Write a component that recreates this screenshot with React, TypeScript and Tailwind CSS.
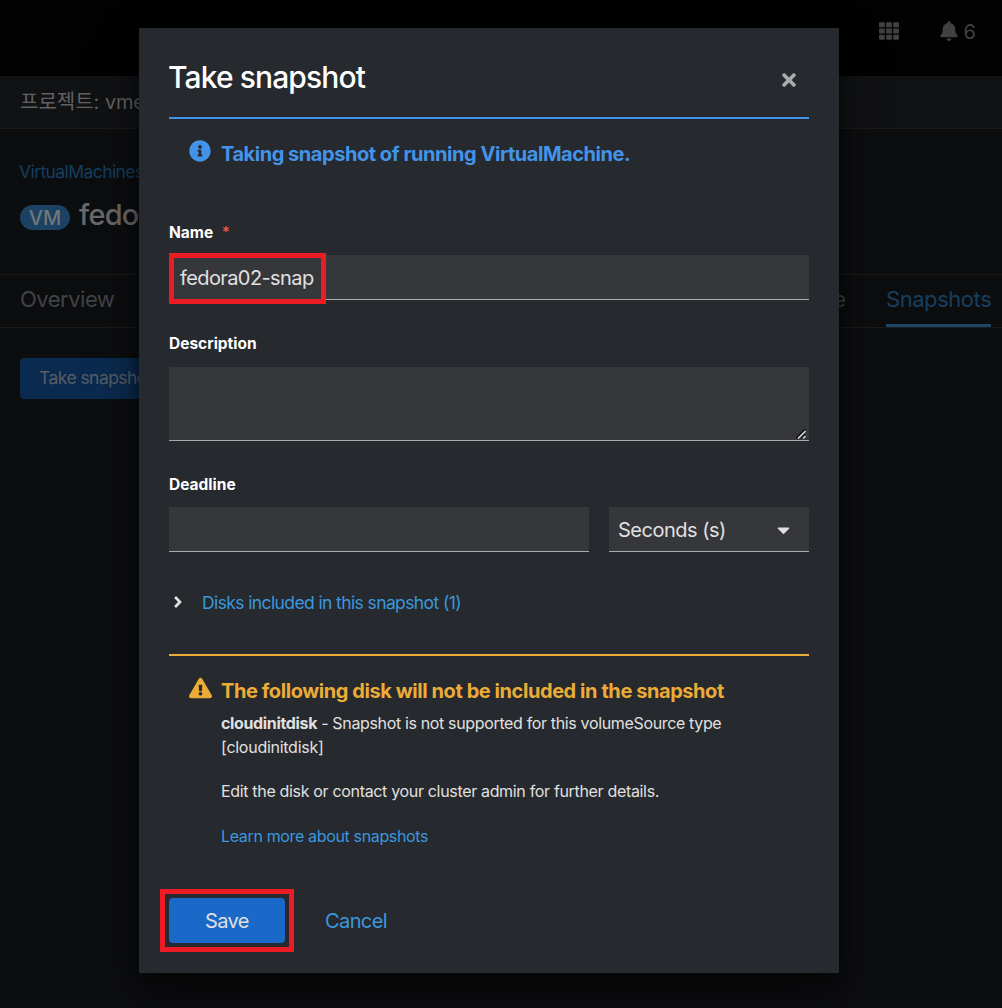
import React from "react";
import { FaBell, FaCaretDown, FaExclamationTriangle, FaInfoCircle, FaTh, FaTimes, FaAngleRight } from "react-icons/fa";

function ConsolePage() {
  return (
    <div className="h-full w-full bg-[#0c0d0f]">
      <header className="flex h-[76px] items-start justify-end bg-[#020202] pr-[26px] text-[#414141]">
        <FaTh className="mt-[21px] h-[20px] w-[20px]" />
        <FaBell className="mt-[21px] ml-[41px] h-[20px] w-[18px]" />
        <span className="mt-[17px] ml-[6px] text-[20px] leading-[30px]">6</span>
      </header>
      <div className="flex h-[53px] items-center border-b border-[#1b1b1c] bg-[#111214] pb-[3px] pl-[20px]">
        <span className="mt-[2px] text-[20px] leading-[30px] whitespace-nowrap text-[#616162]">프로젝트: <span className="tracking-[-0.2px]">vme</span></span>
      </div>
      <div className="h-[145px] px-[20px] pt-[31px]">
        <div className="-ml-[1px] text-[17.5px] leading-[24px] tracking-[-0.58px] text-[#163e60]">VirtualMachines</div>
        <div className="mt-[14px] flex items-center">
          <span className="mt-[4px] flex h-[25px] w-[50px] items-center justify-center rounded-full bg-[#1b4263] pt-[1px] text-[20px] font-medium text-[#727678]">VM</span>
          <span className="ml-[9px] text-[29px] leading-[34px] font-medium tracking-[-0.8px] text-[#69696a]">fedo</span>
        </div>
      </div>
      <nav className="flex h-[54px] items-stretch justify-between border-y border-[#1b1b1c] pr-[11px] pl-[20px] text-[22px] leading-[48px] text-[#424344]">
        <span className="tracking-[-0.5px]">Overview</span>
        <div className="flex">
          <span className="mr-[40px]">Console</span>
          <span className="h-[52px] w-[105px] border-b-[3px] border-[#1b4668] tracking-[-0.45px] whitespace-nowrap text-[#173f60]">Snapshots</span>
        </div>
      </nav>
      <div className="px-[20px] pt-[30px]">
        <button className="h-[41px] w-[160px] rounded-[4px] bg-[#0b2a4f] pl-[19px] text-left text-[17.5px] tracking-[-0.55px] text-[#575e67]">Take snapshot</button>
      </div>
    </div>
  );
}

function Label({ children }: { children: React.ReactNode }) {
  return <label className="block h-[24px] text-[15.5px] leading-[26px] font-bold text-white">{children}</label>;
}

function SnapshotDialog() {
  return (
    <section role="dialog" className="h-[945px] w-[700px] bg-[#26292d] px-[30px] pt-[29px] text-[#e0e0e0] shadow-[0_20px_40px_rgba(0,0,0,0.55),0_0_10px_rgba(0,0,0,0.4)]">
      <div className="flex h-[40px] items-center justify-between pr-[12px]">
        <h1 className="-ml-[1px] text-[30px] leading-[40px] font-medium tracking-[-0.88px] text-white">Take snapshot</h1>
        <FaTimes className="mt-[5px] h-[20px] w-[16px] text-[#aaabac]" />
      </div>

      <div className="mt-[20px] flex h-[74px] border-t-2 border-[#4394e9] px-[20px] text-[#4394e9]">
        <FaInfoCircle className="mt-[21px] h-[22px] w-[22px]" />
        <h2 className="mt-[20px] ml-[10px] text-[20px] leading-[30px] font-bold tracking-[-0.46px]">Taking snapshot of running VirtualMachine.</h2>
      </div>

      <div className="mt-[29px]">
        <Label>Name <span className="ml-[5px] font-normal text-[#f0604d]">*</span></Label>
        <div className="relative mt-[11px] h-[45px] border-b border-[#aaabac] bg-[#36373a] pl-[11px] text-[20px] leading-[46px]">
          <span className="tracking-[-0.6px]">fedora02-snap</span>
          <div className="absolute -top-[2px] left-0 h-[51px] w-[157px] border-[5px] border-[#ed1c24]" />
        </div>
      </div>

      <div className="mt-[31px]">
        <Label>Description</Label>
        <div className="mt-[12px] flex h-[74px] items-end justify-end border-b border-[#aaabac] bg-[#36373a] pr-[3px] pb-[1px]">
          <svg width="10" height="10" viewBox="0 0 10 10" fill="none">
            <path d="M.5 9 9 .5M5.5 9 9 5.5" stroke="#111" strokeWidth="2" />
            <path d="M2 9.5 9.5 2M7 9.5 9.5 7" stroke="#ddd" strokeWidth="1.5" />
          </svg>
        </div>
      </div>

      <div className="mt-[31px]">
        <Label>Deadline</Label>
        <div className="mt-[11px] flex gap-[20px]">
          <div className="h-[45px] w-[420px] border-b border-[#aaabac] bg-[#36373a]" />
          <div className="flex h-[45px] w-[200px] items-center justify-between border-b border-[#aaabac] bg-[#36373a] pr-[19px] pl-[9px] text-[20px]">
            <span className="mt-[2px] tracking-[-0.5px]">Seconds (s)</span>
            <FaCaretDown className="mt-[1px] h-[20px] w-[13px]" />
          </div>
        </div>
      </div>

      <div className="mt-[38px] flex h-[25px] items-center pl-[3px]">
        <FaAngleRight className="-mt-[2px] h-[18px] w-[12px] text-[#e0e0e0]" />
        <span className="ml-[18px] text-[17.5px] leading-[25px] tracking-[-0.61px] text-[#3b97df]">Disks included in this snapshot (1)</span>
      </div>

      <div className="mt-[39px] flex h-[194px] border-t-2 border-[#ebac38] pl-[20px]">
        <FaExclamationTriangle className="mt-[21px] h-[22px] w-[23px] shrink-0 text-[#ebac38]" />
        <div className="ml-[9px] pt-[20px] text-[16px] leading-[24px] whitespace-nowrap">
          <h2 className="text-[20px] leading-[30px] font-bold tracking-[-0.43px] text-[#ebac38]">The following disk will not be included in the snapshot</h2>
          <p className="mt-[5px] tracking-[-0.35px]"><b>cloudinitdisk</b> - Snapshot is not supported for this volumeSource type</p>
          <p className="tracking-[-0.27px]">[cloudinitdisk]</p>
          <p className="mt-[20px] tracking-[-0.33px]">Edit the disk or contact your cluster admin for further details.</p>
          <p className="mt-[21px] tracking-[-0.35px] text-[#3b97df]">Learn more about snapshots</p>
        </div>
      </div>

      <div className="mt-[50px] flex h-[45px] items-center text-[20px] tracking-[-0.6px]">
        <div className="relative h-[45px] w-[116px] rounded-[4px] bg-[#1a68c7] text-center leading-[46px]">
          Save
          <div className="absolute -top-[9px] -left-[9px] h-[63px] w-[134px] border-[5px] border-[#ed1c24]" />
        </div>
        <span className="ml-[40px] text-[#3b97df]">Cancel</span>
      </div>
    </section>
  );
}

export default function App() {
  return (
    <main className="relative h-[1008px] w-[1002px] overflow-hidden font-['Inter','Noto_Sans_CJK_KR',sans-serif]">
      <ConsolePage />
      <div className="absolute inset-0 flex items-start pt-[28px] pl-[139px]">
        <SnapshotDialog />
      </div>
    </main>
  );
}
